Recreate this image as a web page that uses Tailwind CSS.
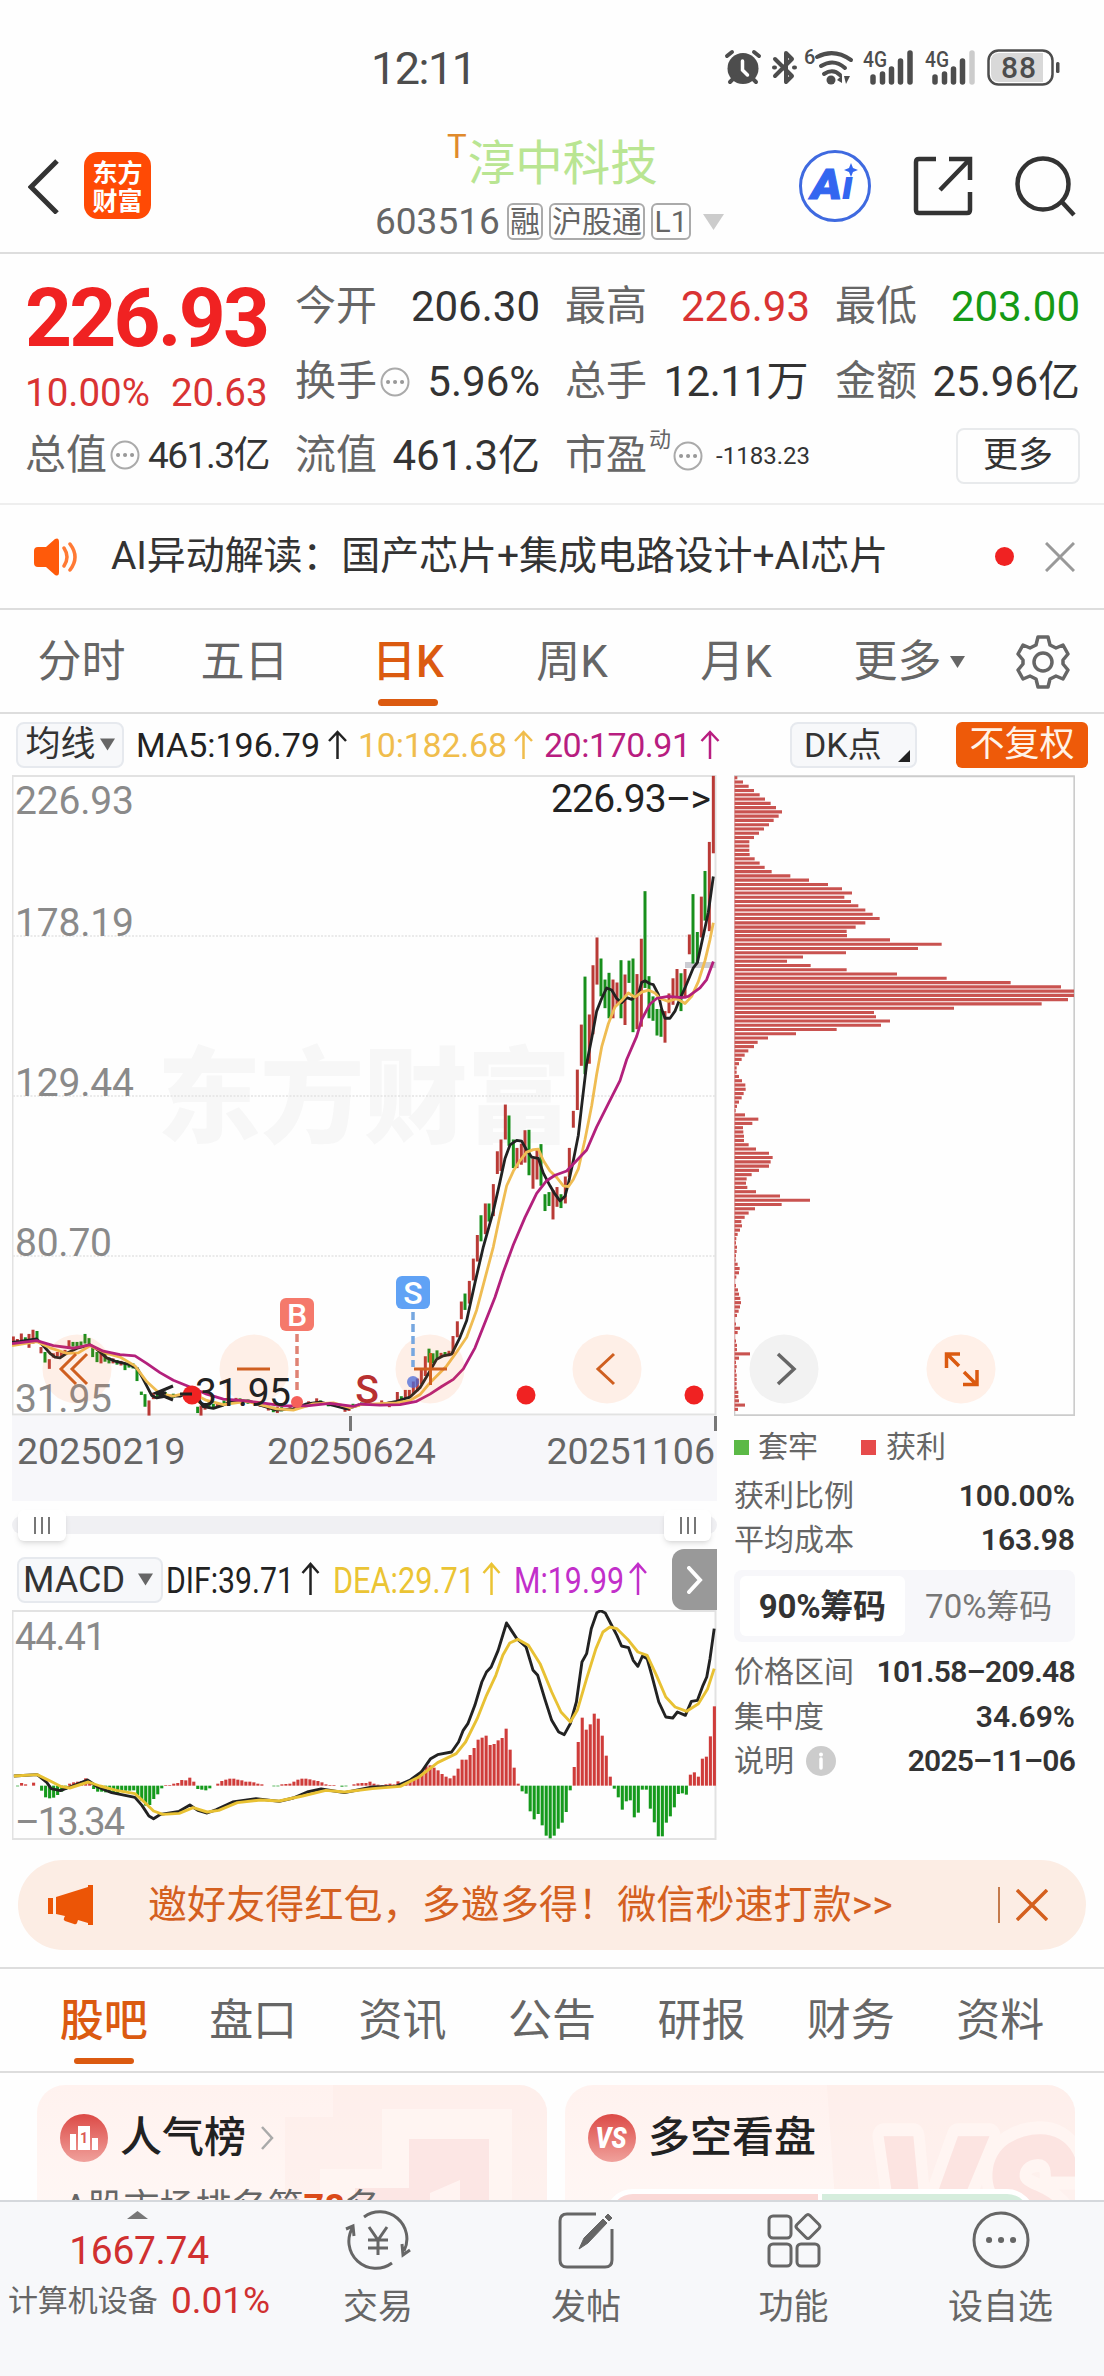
<!DOCTYPE html>
<html lang="zh-CN">
<head>
    <meta charset="UTF-8">
    <title>淳中科技 603516</title>
    <script src="https://cdn.jsdelivr.net/npm/@tailwindcss/browser@4"></script>
    <style>
        body {
            font-family: Roboto, 'Noto Sans CJK SC', sans-serif;
        }
    </style>
</head>
<body class="bg-[#fefefe] text-[#333] w-[1104px] h-[2376px] overflow-hidden flex flex-col leading-none whitespace-nowrap">

    <!-- Status bar -->
    <div class="h-[110px] shrink-0 flex justify-between pl-[371px] pr-[34px] pt-[36px]">
        <div class="h-16 flex items-center text-[45px] tracking-[-1.500px] text-[#4d4d4d]">12:11</div>
        <svg class="w-[360px] h-16" viewBox="0 0 360 64" fill="#4d4d4d">
            <!-- alarm -->
            <circle cx="33" cy="32.500" r="15.500"/>
            <path d="M17 20l5-4M49 20l-5-4M20 46l5-5M46 46l-5-5" stroke="#4d4d4d" stroke-width="4" stroke-linecap="round"/>
            <path d="M32.500 25v9l5 5" stroke="#fff" stroke-width="3.500" fill="none" stroke-linecap="round"/>
            <!-- bluetooth -->
            <path d="M65 23l17 17-6 6V17l6 6-17 17M64 31.500h1M84 31.500h1" stroke="#4d4d4d" stroke-width="4" fill="none" stroke-linejoin="round" stroke-linecap="round"/>
            <!-- wifi -->
            <text x="94" y="28" font-size="20" font-weight="500">6</text>
            <path d="M107 21q17-9 34 3M111 30q13-8 24 2M114 38q9-6 16 1" stroke="#4d4d4d" stroke-width="4" fill="none" stroke-linecap="round"/>
            <circle cx="121" cy="44" r="4.500"/>
            <path d="M127 44l5-5v8zM134 40h6l-4 8z"/>
            <!-- signals -->
            <text x="153" y="31" font-size="22" font-weight="500" textLength="24" lengthAdjust="spacingAndGlyphs">4G</text>
            <path d="M163 41v5M172.500 38v8M181.500 33v13M190.500 25v21M200 17v29" stroke="#4d4d4d" stroke-width="5.500" stroke-linecap="round"/>
            <text x="215" y="31" font-size="22" font-weight="500" textLength="24" lengthAdjust="spacingAndGlyphs">4G</text>
            <path d="M225 41v5M234.500 38v8M243.500 33v13M252.500 25v21" stroke="#4d4d4d" stroke-width="5.500" stroke-linecap="round"/>
            <path d="M262 17v29" stroke="#ccc" stroke-width="5.500" stroke-linecap="round"/>
            <!-- battery -->
            <rect x="278.500" y="14.500" width="64" height="34" rx="10" fill="#fff" stroke="#4d4d4d" stroke-width="2.500"/>
            <path d="M289 17h44v29h-44q-8 0-8-8V25q0-8 8-8z" fill="#d9d9d9"/>
            <rect x="346" y="26" width="3.500" height="11" rx="1.500"/>
            <text x="291" y="42" font-size="30" font-weight="500" textLength="35">88</text>
        </svg>
    </div>

    <!-- Title bar -->
    <header class="h-36 shrink-0 relative border-b-2 border-[#ddd] flex items-center pt-[10px] px-[28px]">
        <svg class="w-8 h-14" viewBox="0 0 32 56" fill="none" stroke="#333" stroke-width="5"><path d="M29 3L3 29l26 26"/></svg>
        <div class="ml-6 -mt-[2px] size-[67px] rounded-[14px] bg-[#ff4a05] text-white text-[25px] font-bold leading-[28px] flex flex-col items-center justify-center" style="font-family:'Noto Sans CJK SC',sans-serif"><span>东方</span><span>财富</span></div>
        <div class="absolute left-[375px] top-[22px] w-[352px]">
            <div class="flex pl-[72px]">
                <span class="text-[33px] text-[#e08a2c] -mt-[2px]">T</span>
                <span class="text-[47.500px] leading-[66px] text-[#b9e592] -mt-[1px] ml-px">淳中科技</span>
            </div>
            <div class="flex items-center gap-[6px] mt-[6px] text-[#666]">
                <span class="text-[37px] w-[126px]">603516</span>
                <span class="h-[37px] w-[36px] border-2 border-[#aaa] rounded-md flex items-center justify-center text-[30px]">融</span>
                <span class="h-[37px] w-[96px] border-2 border-[#aaa] rounded-md flex items-center justify-center text-[30px]">沪股通</span>
                <span class="h-[37px] w-[40px] border-2 border-[#aaa] rounded-md flex items-center justify-center text-[30px]">L1</span>
                <svg class="w-[21px] h-4 ml-[6px]" viewBox="0 0 21 16" fill="#ccc"><path d="M0 0h21L10.500 16z"/></svg>
            </div>
        </div>
        <div class="ml-auto flex items-center gap-[42px] -mr-[1px]">
            <svg class="size-[72px]" viewBox="0 0 72 72">
                <circle cx="36" cy="36" r="34.500" fill="#fff" stroke="#3f6ae0" stroke-width="3"/>
                <g font-size="42" font-weight="900" font-style="italic" fill="#3366f0">
                    <text x="12" y="49" stroke="#3366f0" textLength="31" lengthAdjust="spacingAndGlyphs">A</text>
                    <text x="43" y="49" font-size="41">ı</text>
                </g>
                <path d="M52 13l2 5 5 2-5 2-2 5-2-5-5-2 5-2z" fill="#3366f0"/>
            </svg>
            <svg class="size-[60px]" viewBox="0 0 60 60" fill="none" stroke="#333" stroke-width="4.500"><path d="M23 3H6q-3 0-3 3v48q0 3 3 3h48q3 0 3-3V36M36 3h21v21M57 3L27 34"/></svg>
            <svg class="size-[62px]" viewBox="0 0 62 62" fill="none" stroke="#333" stroke-width="4.500"><circle cx="28" cy="29" r="25.500"/><path d="M47 47l12 13"/></svg>
        </div>
    </header>

    <!-- Quote -->
    <section class="h-[251px] shrink-0 border-b-2 border-[#eee] flex pl-[25px] pt-[15px] text-[42px]">
        <div class="w-[270px]">
            <div class="h-[98px] flex items-center text-[82px] font-bold tracking-[-2.800px] text-[#f02222]">226.93</div>
            <div class="h-[52px] flex items-center gap-[21px] text-[38.500px] text-[#d93333]"><span>10.00%</span><span>20.63</span></div>
            <div class="h-[72px] w-[245px] flex items-center">
                <span class="text-[41px] text-[#666]">总值</span>
                <svg class="ml-[3px] size-[30px] shrink-0" viewBox="0 0 30 30"><circle cx="15" cy="15" r="13.500" fill="none" stroke="#aaa" stroke-width="2"/><path d="M8 15h.1M15 15h.1M22 15h.1" stroke="#999" stroke-width="4" stroke-linecap="round"/></svg>
                <span class="ml-2 text-[37px] tracking-[-1.500px]">461.3亿</span>
            </div>
        </div>
        <div class="grid grid-cols-[270px_270px_245px] grid-rows-[75px_75px_73px]">
            <div class="w-[245px] flex items-center justify-between"><span class="text-[41px] text-[#666]">今开</span><span>206.30</span></div>
            <div class="w-[245px] flex items-center justify-between"><span class="text-[41px] text-[#666]">最高</span><span class="text-[#d93333]">226.93</span></div>
            <div class="w-[245px] flex items-center justify-between"><span class="text-[41px] text-[#666]">最低</span><span class="text-[#159a15]">203.00</span></div>
            <div class="w-[245px] flex items-center">
                <span class="text-[41px] text-[#666]">换手</span>
                <svg class="ml-[3px] size-[30px] shrink-0" viewBox="0 0 30 30"><circle cx="15" cy="15" r="13.500" fill="none" stroke="#aaa" stroke-width="2"/><path d="M8 15h.1M15 15h.1M22 15h.1" stroke="#999" stroke-width="4" stroke-linecap="round"/></svg>
                <span class="ml-auto">5.96%</span>
            </div>
            <div class="w-[243px] flex items-center justify-between"><span class="text-[41px] text-[#666]">总手</span><span class="tracking-[-.5px]">12.11万</span></div>
            <div class="w-[245px] flex items-center justify-between"><span class="text-[41px] text-[#666]">金额</span><span>25.96亿</span></div>
            <div class="w-[245px] flex items-center justify-between"><span class="text-[41px] text-[#666]">流值</span><span>461.3亿</span></div>
            <div class="w-[245px] flex items-center">
                <span class="text-[41px] text-[#666]">市盈</span>
                <span class="text-[22px] text-[#666] -mt-8 ml-[2px]">动</span>
                <svg class="ml-[2px] size-[30px] shrink-0" viewBox="0 0 30 30"><circle cx="15" cy="15" r="13.500" fill="none" stroke="#aaa" stroke-width="2"/><path d="M8 15h.1M15 15h.1M22 15h.1" stroke="#999" stroke-width="4" stroke-linecap="round"/></svg>
                <span class="ml-auto text-[24px]">-1183.23</span>
            </div>
            <div class="flex items-center justify-end"><span class="w-[124px] h-14 border-2 border-[#e8eaec] rounded-lg flex items-center justify-center text-[35px]">更多</span></div>
        </div>
    </section>

    <!-- AI news line -->
    <section class="h-[105px] shrink-0 border-b-2 border-[#ddd] flex items-center pl-[33px] pr-[29px] text-[39px]">
        <svg class="w-[46px] h-10" viewBox="0 0 46 40" fill="#ff5a0a"><path d="M5 10h8L22 2q4-2 4 3v30q0 5-4 3l-9-8H5q-4 0-4-4V14q0-4 4-4z"/><path d="M31 11q6 9 0 18M37 7q10 13 0 26" stroke="#ff7a35" stroke-width="3.500" fill="none" stroke-linecap="round"/></svg>
        <span class="ml-[32px] tracking-[-.1px]">AI异动解读：国产芯片+集成电路设计+AI芯片</span>
        <span class="ml-auto size-[19px] rounded-full bg-[#f02222]"></span>
        <svg class="ml-[31px] size-[30px]" viewBox="0 0 30 30" stroke="#999" stroke-width="3"><path d="M1 1l28 28M29 1L1 29"/></svg>
    </section>

    <!-- Period tabs -->
    <nav class="h-[104px] shrink-0 border-b-2 border-[#ddd] grid grid-cols-[163px_163px_164px_164px_164px_182px_86px] text-[44px] text-[#666] pt-[2px]">
        <span class="flex items-center justify-center">分时</span>
        <span class="flex items-center justify-center">五日</span>
        <span class="flex items-center justify-center relative text-[#db5a10] font-medium">日K<i class="absolute bottom-[6px] w-[60px] h-[7px] rounded-full bg-[#db5a10]"></i></span>
        <span class="flex items-center justify-center">周K</span>
        <span class="flex items-center justify-center">月K</span>
        <span class="flex items-center justify-center gap-2">更多<svg class="w-[15px] h-3" viewBox="0 0 15 12" fill="#666"><path d="M0 0h15L7.500 12z"/></svg></span>
        <svg class="self-center justify-self-center size-[54px]" viewBox="0 0 54 54" fill="none" stroke="#666" stroke-width="3.500" stroke-linejoin="round"><path d="M22 2h10l2 8 6 3 7-3 5 9-5 6v4l5 6-5 9-7-3-6 3-2 8H22l-2-8-6-3-7 3-5-9 5-6v-4l-5-6 5-9 7 3 6-3z"/><circle cx="27" cy="27" r="9"/></svg>
    </nav>

    <!-- MA row -->
    <div class="h-[61px] shrink-0 flex items-center pl-4 pr-4 text-[34px]">
        <span class="w-[108px] h-[46px] bg-[#f7f8fa] border-2 border-[#e6e9ee] rounded-lg flex items-center justify-center gap-1 text-[35px]">均线<svg class="w-[15px] h-[13px]" viewBox="0 0 15 12" fill="#666"><path d="M0 0h15L7.500 12z"/></svg></span>
        <svg class="ml-3 h-[46px] w-[590px]" viewBox="136 0 590 46" fill="none" stroke-width="2.500">
            <text x="136" y="35" fill="#222" textLength="184">MA5:196.79</text>
            <path d="M337.500 37V10M329 19l8.500-9 8.500 9" stroke="#222"/>
            <text x="358" y="35" fill="#f0bd4c" textLength="149">10:182.68</text>
            <path d="M523.500 37V10M515 19l8.500-9 8.500 9" stroke="#f0bd4c"/>
            <text x="544" y="35" fill="#b81d80" textLength="147">20:170.91</text>
            <path d="M710 37V10M701.500 19l8.500-9 8.500 9" stroke="#b81d80"/>
        </svg>
        <span class="ml-auto relative w-[127px] h-[46px] bg-[#f7f8fa] border-2 border-[#e6e9ee] rounded-lg flex items-center pl-3">DK点<svg class="absolute right-[5px] bottom-1 size-3" viewBox="0 0 12 12" fill="#222"><path d="M12 0v12H0z"/></svg></span>
        <span class="ml-[39px] w-[132px] h-[46px] bg-[#ee5a09] rounded-md flex items-center justify-center text-[35px] text-[#fff3e8]">不复权</span>
    </div>

    <!-- Charts -->
    <main class="h-[1065px] shrink-0 flex pl-3">
        <div class="w-[705px]">
            <div class="relative w-[705px] h-[641px]">
                <svg class="absolute inset-0 w-[705px] h-[641px]" viewBox="12 776 705 641">
                    <text x="157" y="1136" font-size="104" font-weight="900" fill="#f7f7f7" textLength="414">东方财富</text>
                    <rect x="12.500" y="777" width="703" height="638.500" fill="none" stroke="#e2e2e2" stroke-width="2"/>
                    <path d="M13 937h703M13 1097h703M13 1257h703" stroke="#e4e4e4" stroke-width="1.500" stroke-dasharray="2 1.500"/>
                    <g font-size="39" fill="#8a8a8a">
                        <text x="15" y="815" textLength="119">226.93</text>
                        <text x="15" y="937" textLength="119">178.19</text>
                        <text x="15" y="1097" textLength="119">129.44</text>
                        <text x="15" y="1257" textLength="97">80.70</text>
                        <text x="15" y="1413" textLength="97">31.95</text>
                    </g>
                    <rect x="685" y="963" width="31" height="6" fill="#ccccd2"/>
                </svg>
                <svg id="kline" class="absolute inset-0 w-[705px] h-[641px]" viewBox="36 14 2115 1523" preserveAspectRatio="none" fill="none"></svg>
                <svg class="absolute inset-0 w-[705px] h-[641px]" viewBox="12 776 705 641">
                    <g fill="#ff6a1a" fill-opacity=".1">
                        <circle cx="77" cy="1370" r="34.500"/><circle cx="254" cy="1370" r="34.500"/><circle cx="430" cy="1370" r="34.500"/><circle cx="607" cy="1370" r="34.500"/>
                    </g>
                    <text x="551" y="813" font-size="39" fill="#222" textLength="160">226.93–&gt;</text>
                    <text x="195" y="1407" font-size="39" fill="#222" textLength="96">31.95</text>
                    <g fill="#f02222"><circle cx="192" cy="1396" r="9.500"/><circle cx="526" cy="1396" r="9.500"/><circle cx="694" cy="1396" r="9.500"/></g>
                    <path d="M173 1387l-17 7 17 7M158 1394h8M180 1395h12" stroke="#222" stroke-width="3" fill="none"/>
                    <g stroke="#cf5f20" stroke-width="3" fill="none">
                        <path d="M76 1355l-15 15 15 15M87 1355l-15 15 15 15M237 1370h33M414 1370h33M430.500 1354v32M614 1355l-16 15 16 15"/>
                    </g>
                    <path d="M297 1335v60" stroke="#df8274" stroke-width="3.500" stroke-dasharray="8 4"/>
                    <rect x="280" y="1299" width="34" height="33" rx="6" fill="#f5796b"/>
                    <text x="297" y="1327" font-size="32" font-weight="500" fill="#fff" text-anchor="middle">B</text>
                    <circle cx="297" cy="1403" r="6" fill="#f5605a"/>
                    <path d="M413 1313v55" stroke="#76a7e0" stroke-width="3.500" stroke-dasharray="8 4"/>
                    <rect x="396" y="1277" width="34" height="33" rx="6" fill="#60a2f5"/>
                    <text x="413" y="1305" font-size="32" font-weight="500" fill="#fff" text-anchor="middle">S</text>
                    <circle cx="413" cy="1383" r="6" fill="#4a6ad8" fill-opacity=".75"/>
                    <text x="367" y="1404" font-size="39" font-weight="500" fill="#b83030" text-anchor="middle">S</text>
                </svg>
            </div>

            <!-- Date axis -->
            <div class="relative h-[85px] bg-[#f7f7fa] flex justify-between pl-[5px] pr-[2px] pt-[17px] text-[37.500px] text-[#666]">
                <i class="absolute left-[337px] top-0 w-[3px] h-[15px] bg-[#777]"></i>
                <i class="absolute right-0 top-0 w-[3px] h-[15px] bg-[#777]"></i>
                <span>20250219</span><span class="mr-[29px]">20250624</span><span>20251106</span>
            </div>

            <!-- Range slider -->
            <div class="h-[48px] flex items-center">
                <div class="w-full h-[18px] rounded-full bg-[#f0f0f3] flex items-center justify-between px-[6px]">
                    <span class="w-[48px] h-[31px] bg-white rounded-md shadow-md flex items-center justify-center gap-[5px]"><i class="w-[2px] h-[17px] bg-[#777]"></i><i class="w-[2px] h-[17px] bg-[#777]"></i><i class="w-[2px] h-[17px] bg-[#777]"></i></span>
                    <span class="w-[47px] h-[31px] bg-white rounded-md shadow-md flex items-center justify-center gap-[5px]"><i class="w-[2px] h-[17px] bg-[#777]"></i><i class="w-[2px] h-[17px] bg-[#777]"></i><i class="w-[2px] h-[17px] bg-[#777]"></i></span>
                </div>
            </div>

            <!-- MACD header -->
            <div class="h-[61px] flex items-center pl-[5px]">
                <span class="w-[146px] h-[46px] bg-[#f7f8fa] border-2 border-[#e6e9ee] rounded-lg flex items-center justify-between pl-[4px] pr-2 text-[36px]">MACD<svg class="w-[15px] h-[13px]" viewBox="0 0 15 12" fill="#666"><path d="M0 0h15L7.500 12z"/></svg></span>
                <svg class="h-[60px] w-[509px]" viewBox="163 1550 509 60" font-size="37" fill="none" stroke-width="2.500">
                    <text x="166" y="1593" fill="#222" textLength="128" lengthAdjust="spacingAndGlyphs">DIF:39.71</text>
                    <path d="M310.500 1595v-31M302.500 1573l8-9 8 9" stroke="#222"/>
                    <text x="333" y="1593" fill="#ebc434" textLength="142" lengthAdjust="spacingAndGlyphs">DEA:29.71</text>
                    <path d="M491.500 1595v-31M483.500 1573l8-9 8 9" stroke="#ebc434"/>
                    <text x="514" y="1593" fill="#c22fca" textLength="110" lengthAdjust="spacingAndGlyphs">M:19.99</text>
                    <path d="M638 1595v-31M630 1573l8-9 8 9" stroke="#c22fca"/>
                </svg>
                <span class="w-[45px] h-[61px] rounded-l-xl bg-[#999] flex items-center justify-center"><svg class="w-4 h-7" viewBox="0 0 16 28" fill="none" stroke="#fff" stroke-width="4" stroke-linecap="round"><path d="M2 2l11 12L2 26"/></svg></span>
            </div>

            <div class="relative w-[705px] h-[230px]">
                <svg class="absolute inset-0 w-[705px] h-[230px]" viewBox="12 1611 705 230">
                    <rect x="12.500" y="1612" width="703" height="228" fill="none" stroke="#e2e2e2" stroke-width="2"/>
                    <g font-size="38" fill="#8a8a8a"><text x="15" y="1651" textLength="91">44.41</text><text x="15" y="1836" textLength="110">–13.34</text></g>
                </svg>
                <svg id="macd" class="absolute inset-0 w-[705px] h-[230px]" viewBox="26 604 1514 690" preserveAspectRatio="none" fill="none"></svg>
            </div>
        </div>

        <!-- Chip distribution -->
        <aside class="ml-[17px] w-[341px]">
            <div class="relative h-[641px]">
                <svg id="chips" class="absolute inset-0 w-[341px] h-[641px]" viewBox="42 14 1023 1523" preserveAspectRatio="none" fill="none"></svg>
                <svg class="absolute inset-0 w-[341px] h-[641px]" viewBox="734 776 341 641">
                    <circle cx="784" cy="1370" r="34.500" fill="#f2f2f2"/>
                    <path d="M778 1355l16 15-16 15" fill="none" stroke="#666" stroke-width="3.500"/>
                    <circle cx="961" cy="1370" r="34.500" fill="#fff0e8"/>
                    <path d="M946.500 1369v-14H960M947 1355l12 12M977 1371v14.500H963M976 1385l-12-12" fill="none" stroke="#db5a10" stroke-width="3.500"/>
                </svg>
            </div>
            <div class="h-[58px] flex items-center text-[30px] text-[#666] pt-1">
                <i class="size-[15px] bg-[#5bb946] mr-[9px]"></i>套牢<i class="size-[15px] bg-[#e64b4b] ml-[43px] mr-[10px]"></i>获利
            </div>
            <div class="h-11 flex items-center justify-between text-[30px]"><span class="text-[#666]">获利比例</span><b class="font-semibold">100.00%</b></div>
            <div class="h-11 flex items-center justify-between text-[30px]"><span class="text-[#666]">平均成本</span><b class="font-semibold">163.98</b></div>
            <div class="my-[8px] h-[72px] bg-[#f7f7fa] rounded-lg p-[6px] grid grid-cols-2 text-[33px]">
                <span class="bg-white rounded-md flex items-center justify-center font-bold tracking-[-.3px]">90%筹码</span>
                <span class="flex items-center justify-center text-[#777] pl-1">70%筹码</span>
            </div>
            <div class="h-11 flex items-center justify-between text-[30px]"><span class="text-[#666]">价格区间</span><b class="font-semibold tracking-[-.7px]">101.58–209.48</b></div>
            <div class="h-[45px] flex items-center justify-between text-[30px]"><span class="text-[#666]">集中度</span><b class="font-semibold">34.69%</b></div>
            <div class="h-11 flex items-center text-[30px]">
                <span class="text-[#666]">说明</span>
                <svg class="ml-3 size-[30px]" viewBox="0 0 30 30"><circle cx="15" cy="15" r="15" fill="#ccc"/><path d="M15 13v9" stroke="#fff" stroke-width="3.500" stroke-linecap="round"/><circle cx="15" cy="8.500" r="2" fill="#fff"/></svg>
                <b class="ml-auto font-semibold tracking-[-.8px]">2025–11–06</b>
            </div>
        </aside>
    </main>

    <!-- Invite banner -->
    <div class="h-[129px] shrink-0 border-b-2 border-[#ddd] pt-[20px] px-[18px]">
        <div class="h-[90px] rounded-full bg-[#fcede4] flex items-center pl-[30px] pr-[38px] text-[39px] text-[#d4601f]">
            <svg class="w-[46px] h-10" viewBox="0 0 46 40" fill="#ec5506"><path d="M0 13h5v16H0zM8 12L40 2V0h5v40h-5v-2l-10-3-1 3q-1 2-3 1l-9-3q-2-1-1-3l1-2-9-2z"/></svg>
            <span class="ml-[54px] tracking-[.1px]">邀好友得红包，多邀多得！微信秒速打款&gt;&gt;</span>
            <i class="ml-auto w-[2px] h-9 bg-[#c47a4c]"></i>
            <svg class="ml-4 w-8 h-8" viewBox="0 0 32 32" stroke="#d4601f" stroke-width="3.500"><path d="M1 1l30 30M31 1L1 31"/></svg>
        </div>
    </div>

    <!-- Info tabs -->
    <nav class="h-[104px] shrink-0 border-b-2 border-[#ddd] grid grid-cols-7 px-[29px] text-[44px] text-[#666] pt-[2px]">
        <span class="flex items-center justify-center relative text-[#db5a10] font-medium">股吧<i class="absolute bottom-[7px] w-[60px] h-[6px] rounded-full bg-[#db5a10]"></i></span>
        <span class="flex items-center justify-center">盘口</span>
        <span class="flex items-center justify-center">资讯</span>
        <span class="flex items-center justify-center">公告</span>
        <span class="flex items-center justify-center">研报</span>
        <span class="flex items-center justify-center">财务</span>
        <span class="flex items-center justify-center">资料</span>
    </nav>

    <!-- Cards -->
    <section class="h-[127px] shrink-0 overflow-hidden flex gap-[18px] pt-[12px] px-[37px]">
        <div class="relative w-[510px] h-[200px] shrink-0 rounded-[28px] overflow-hidden bg-gradient-to-b from-[#fff2ef] to-[#fffaf8]">
            <svg class="absolute inset-0 w-[510px] h-[200px]" viewBox="0 0 510 200"><path d="M248 32h48V0h214v200H248z" fill="#fdebe8" opacity=".5"/><path d="M283 84h62V24h130v176H283z" fill="#fff5f2"/><path d="M318 103h54V54h80v146H318z" fill="#fce6e4"/><path d="M393 108l30-13v60h-30z" fill="#fff3f1"/></svg>
            <div class="relative flex items-center pl-[23px] pt-[29px]">
                <svg class="size-12" viewBox="0 0 48 48"><defs><linearGradient id="badge" x2="0" y2="1"><stop stop-color="#dc4a46"/><stop offset="1" stop-color="#f0a19c"/></linearGradient></defs><circle cx="24" cy="24" r="24" fill="url(#badge)"/><path d="M10 20h6v16h-6zM18 12h12v24H18zM32 24h6v12h-6z" fill="#fff"/><text x="24" y="29" font-size="14" font-weight="700" fill="#dc5a56" text-anchor="middle">1</text></svg>
                <span class="ml-3 text-[42px] font-medium text-[#222]">人气榜</span>
                <svg class="ml-[14px] w-[14px] h-[24px]" viewBox="0 0 14 24" fill="none" stroke="#aaa" stroke-width="2.500"><path d="M2 1l10 11L2 23"/></svg>
            </div>
            <div class="relative pl-[27px] mt-[28px] text-[36px] text-[#666]">A股市场排名第<b class="text-[#db4a18]">78</b>名</div>
        </div>
        <div class="relative w-[510px] h-[200px] shrink-0 rounded-[28px] overflow-hidden bg-gradient-to-b from-[#fff2ef] to-[#fffaf8]">
            <svg class="absolute inset-0 w-[510px] h-[200px]" viewBox="0 0 510 200"><path d="M262 0h248v200H276z" fill="#fdebe8" opacity=".5"/><text x="308" y="187" font-size="190" font-weight="900" font-style="italic" fill="#fce4e1" stroke="#fff5f2" stroke-width="26" stroke-linejoin="round" paint-order="stroke" textLength="204" lengthAdjust="spacingAndGlyphs">VS</text></svg>
            <div class="relative flex items-center pl-[23px] pt-[29px]">
                <svg class="size-12" viewBox="0 0 48 48"><circle cx="24" cy="24" r="24" fill="url(#badge)"/><text x="23" y="34" font-size="29" font-weight="900" font-style="italic" fill="#fff" text-anchor="middle" textLength="31" lengthAdjust="spacingAndGlyphs">VS</text></svg>
                <span class="ml-3 text-[42px] font-medium text-[#222]">多空看盘</span>
            </div>
            <div class="relative mx-[40px] mt-[27px] h-16 rounded-[28px] border-[5px] border-white overflow-hidden flex gap-1 bg-white"><i class="flex-1 bg-[#fad9d7]"></i><i class="flex-1 bg-[#d5eddd]"></i></div>
        </div>
    </section>

    <!-- Bottom bar -->
    <footer class="h-[177px] shrink-0 border-t-2 border-[#d5d8dc] bg-[#f7f8fa] flex text-[#666] text-[35px]">
        <div class="w-[274px] flex flex-col items-center pt-[9px]">
            <svg class="w-[21px] h-2" viewBox="0 0 21 8" fill="#777"><path d="M0 8h21L10.500 0z"/></svg>
            <span class="mt-[13px] ml-1 text-[39px] tracking-[-.3px] text-[#d03030]">1667.74</span>
            <div class="mt-[11px] ml-1 flex items-center gap-[13px]"><span class="text-[30px]">计算机设备</span><span class="text-[37px] text-[#d03030]">0.01%</span></div>
        </div>
        <div class="w-[208px] flex flex-col items-center pt-[8px]">
            <svg class="w-[66px] h-[60px]" viewBox="0 0 66 60" fill="none" stroke="#666" stroke-width="3"><path d="M19 7a27 27 0 0 1 40 34M47 53a27 27 0 0 1-39-36M1 19l7-3 1 10M65 40l-7 5-1-11M24 17l9 13 9-13M33 30v15M23 30h20M23 38h20"/></svg>
            <span class="mt-5">交易</span>
        </div>
        <div class="w-[208px] flex flex-col items-center pt-[8px]">
            <svg class="size-[60px]" viewBox="0 0 60 60" fill="none" stroke="#666" stroke-width="3"><path d="M40 4H11q-7 0-7 7v39q0 7 7 7h38q7 0 7-7V19"/><path d="M23 39l5-11L47 9l4 4-19 20zM49 7l3-3 4 4-3 3z" fill="#666" stroke-width="1"/></svg>
            <span class="mt-5">发帖</span>
        </div>
        <div class="w-[207px] flex flex-col items-center pt-[8px]">
            <svg class="size-[60px]" viewBox="0 0 60 60" fill="none" stroke="#666" stroke-width="3"><rect x="5" y="6" width="22" height="22" rx="4"/><rect x="5" y="34" width="22" height="22" rx="4"/><rect x="33" y="34" width="22" height="22" rx="4"/><path d="M42 5.500q2-2 4 0l9 9q2 2 0 4l-9 9q-2 2-4 0l-9-9q-2-2 0-4z"/></svg>
            <span class="mt-5">功能</span>
        </div>
        <div class="w-[207px] flex flex-col items-center pt-[8px]">
            <svg class="size-[60px]" viewBox="0 0 60 60" fill="none" stroke="#666" stroke-width="3"><circle cx="30" cy="30" r="27"/><path d="M18 30h.1M30 30h.1M42 30h.1" stroke-width="6" stroke-linecap="round"/></svg>
            <span class="mt-5">设自选</span>
        </div>
    </footer>

    <script>
        const RED = "#b93a36", GREEN = "#188f1c";

        function line(d, color, width) {
            return `<path d="${d}" stroke="${color}" stroke-width="${width}" stroke-linejoin="round" vector-effect="non-scaling-stroke"/>`;
        }

        // candles: x, high, low, r/g
        const early = "40 1348 1368 r,52 1354 1364 r,64 1341 1358 r,76 1350 1362 g,87 1342 1375 r,99 1332 1365 r,111 1335 1358 g,123 1373 1388 r,135 1385 1410 g,148 1402 1425 r,160 1388 1398 r,172 1385 1395 r,184 1385 1397 r,195 1380 1392 r,207 1357 1375 r,219 1361 1372 g,231 1361 1373 g,243 1360 1370 g,255 1342 1365 g,267 1352 1372 g,278 1372 1397 g,291 1385 1409 g,303 1385 1412 r,315 1385 1408 g,327 1398 1412 g,339 1400 1412 r,351 1404 1415 g,363 1406 1417 r,375 1412 1428 g,387 1410 1422 g,399 1412 1424 g,411 1422 1454 g,424 1479 1487 g,435 1485 1515 g,447 1500 1536 r,460 1482 1497 r,472 1480 1492 g,484 1476 1492 r,496 1480 1494 g,520 1484 1494 g,593 1515 1530 g,603 1512 1536 r,615 1508 1522 r,627 1505 1518 g,640 1508 1520 g,652 1504 1514 r,672 1500 1512 g,708 1494 1504 r,720 1495 1504 g,744 1498 1508 g,780 1505 1515 r,805 1512 1524 r,820 1515 1528 g,832 1515 1530 r,845 1516 1526 g,870 1516 1524 r,926 1502 1510 r,950 1495 1508 r,962 1500 1508 g,985 1506 1514 g,1035 1515 1527 r,1047 1515 1525 r,1059 1508 1518 g";
        const late = "65 1500 1510 r,88 1503 1516 r,112 1480 1503 r,124 1490 1505 g,136 1475 1495 r,148 1475 1493 r,160 1455 1485 r,172 1448 1478 r,184 1425 1462 r,196 1395 1442 r,207 1377 1410 g,219 1388 1412 g,231 1381 1400 g,243 1387 1397 r,255 1385 1395 g,267 1382 1395 r,279 1347 1390 r,292 1312 1350 r,304 1265 1307 r,315 1246 1285 g,328 1216 1270 r,340 1163 1215 r,352 1107 1170 r,363 1060 1122 g,376 1032 1105 r,387 1032 1075 g,400 986 1062 r,412 908 962 r,423 880 955 r,436 797 880 r,447 823 895 g,460 880 948 g,471 900 948 r,484 890 940 r,495 858 935 r,507 857 965 g,519 925 997 r,531 905 975 r,543 891 990 g,555 1010 1050 g,567 1005 1038 g,579 1000 1070 r,591 993 1040 r,603 1010 1043 g,616 968 1032 r,628 900 970 r,640 812 852 r,652 714 810 r,664 607 705 r,675 493 725 g,688 583 700 r,699 466 630 r,711 400 512 r,723 450 540 g,735 500 568 g,747 484 592 g,759 500 592 r,771 507 560 r,783 454 592 g,795 488 608 r,807 455 508 g,819 450 625 g,831 487 618 r,844 403 612 r,855 290 520 g,867 492 592 g,879 540 598 g,891 570 633 g,903 570 636 g,915 575 650 r,927 533 580 r,939 497 560 r,951 475 540 r,963 485 575 g,975 475 545 r,988 393 440 r,999 297 462 g,1012 387 460 g,1024 303 400 r,1035 242 360 g,1048 173 385 r,1060 16 200 r";

        function candles(list) {
            return list.split(",").map((c) => {
                const [x, high, low, dir] = c.split(" ");
                return line(`M${x} ${high}V${low}`, dir === "r" ? RED : GREEN, 3);
            }).join("");
        }

        document.getElementById("kline").innerHTML =
            candles(early) +
            line("M36 1362L60 1360 110 1354 130 1370 150 1388 165 1397 180 1399 200 1388 235 1375 270 1368 290 1378 320 1399 350 1408 390 1415 412 1424 430 1450 455 1488 470 1494 500 1490 540 1490 570 1480 590 1490 610 1515 640 1519 670 1511 700 1500 750 1502 780 1511 830 1523 880 1520 920 1508 960 1504 1000 1512 1040 1520 1080 1510", "#222", 2.8) +
            line("M36 1370L110 1360 150 1375 200 1388 235 1387 270 1370 320 1388 360 1397 405 1418 440 1455 480 1484 520 1490 570 1480 620 1500 670 1510 740 1502 830 1520 880 1523 940 1508 1000 1506 1050 1517 1080 1511", "#efbc52", 2.8) +
            line("M36 1365L110 1358 160 1370 220 1376 270 1368 310 1383 360 1391 405 1394 440 1412 480 1434 520 1452 570 1468 620 1485 670 1497 720 1500 780 1505 850 1513 920 1513 990 1507 1060 1514 1080 1509", "#b3207c", 2.8) +
            `<g transform="translate(1080 0)">` +
            candles(late) +
            line("M0 1508L60 1510 110 1502 150 1492 180 1470 210 1430 230 1402 250 1394 275 1390 300 1350 320 1310 345 1220 370 1135 400 1050 420 980 435 925 450 893 470 882 485 884 500 905 515 922 535 925 550 960 570 990 585 1010 600 1026 615 1015 625 985 640 930 655 870 665 800 680 700 695 640 710 575 725 545 740 520 755 525 770 545 785 555 800 543 815 547 835 535 845 507 855 503 870 510 880 512 895 535 905 570 915 592 930 592 945 575 960 545 975 520 1000 472 1012 460 1030 395 1045 340 1060 255", "#222", 2.8) +
            line("M0 1510L110 1506 150 1500 180 1486 210 1458 260 1418 290 1385 320 1350 350 1285 375 1210 400 1135 420 1060 440 990 460 955 480 930 500 910 520 904 535 903 550 930 570 955 590 970 610 990 625 992 640 975 655 950 675 880 695 800 710 725 725 660 745 605 765 565 785 550 805 532 825 542 845 530 865 525 885 532 900 545 925 552 950 545 975 557 995 540 1015 505 1035 455 1050 405 1060 365", "#efbc52", 2.8) +
            line("M0 1509L60 1511 120 1510 170 1502 210 1485 245 1467 280 1450 310 1425 345 1375 375 1315 405 1255 430 1195 460 1130 495 1065 530 1008 560 978 585 965 620 955 650 930 680 905 710 850 745 795 780 740 800 690 830 635 845 595 870 558 890 545 925 540 965 543 985 540 1020 520 1040 500 1060 457", "#b3207c", 2.8) +
            "</g>";

        // MACD histogram, one value per trading day
        const hist = [-2,8,4,0,9,0,-15,-35,-38,-36,-28,-18,-12,6,10,12,14,22,12,-10,-18,-18,-20,-20,-20,-22,-18,-15,-15,-14,-30,-45,-60,-58,-40,-26,-8,2,2,6,8,17,16,24,12,-10,-12,-14,-8,0,6,14,18,21,21,18,16,12,12,10,6,4,0,0,-2,-2,4,5,6,12,18,21,21,19,16,14,10,4,2,2,0,-3,-2,0,4,7,8,8,12,6,3,2,4,6,4,
            13,8,11,14,21,33,46,58,61,54,46,35,27,22,30,51,78,78,92,113,138,144,150,122,125,136,143,171,108,54,6,
            -17,-24,-77,-101,-85,-119,-150,-158,-150,-129,-111,-79,-14,56,131,204,168,184,216,201,150,90,27,
            -9,-35,-72,-47,-44,-95,-81,-12,-12,-69,-110,-152,-152,-111,-92,-65,-25,-23,-27,33,40,27,81,87,148,238];

        document.getElementById("macd").innerHTML =
            hist.map((v, i) => v ? line(`M${38 + i * 8.6} 1131V${1131 - v}`, v > 0 ? "#cf3c3a" : "#159a1c", 3.1) : "").join("") +
            line("M30 1102L80 1098 100 1120 110 1140 130 1146 150 1135 188 1114 210 1135 240 1152 290 1166 305 1190 320 1222 330 1230 345 1217 385 1208 408 1189 425 1205 445 1213 465 1203 500 1180 550 1170 600 1178 630 1168 660 1150 690 1141 740 1152 800 1135 850 1133 880 1115 905 1090 925 1050 940 1038 970 1030 985 1000 995 965 1005 945 1020 890 1035 820 1045 790 1055 775 1070 725 1088 643 1110 690 1130 715 1145 785 1155 800 1170 870 1185 935 1200 970 1212 978 1225 945 1238 880 1250 760 1260 735 1270 660 1282 612 1290 606 1300 613 1310 640 1325 680 1335 712 1350 717 1360 755 1370 773 1380 742 1390 750 1400 800 1415 880 1430 925 1445 928 1455 910 1472 920 1485 878 1498 875 1510 830 1518 805 1525 750 1534 660", "#222", 2.9) +
            line("M30 1102L80 1098 105 1115 130 1133 150 1138 190 1120 215 1132 250 1145 290 1155 310 1180 330 1207 350 1217 385 1214 415 1197 445 1210 470 1205 510 1182 560 1174 600 1177 650 1162 700 1145 740 1150 800 1140 860 1133 900 1105 940 1062 980 1035 1000 1000 1025 930 1045 860 1065 800 1080 740 1095 703 1112 692 1135 710 1160 765 1185 850 1205 910 1225 940 1240 905 1260 810 1280 720 1295 670 1310 655 1325 660 1350 695 1370 730 1390 740 1410 800 1430 865 1450 895 1475 908 1500 885 1520 840 1534 780", "#e8c133", 2.9);

        // chip distribution, top price to bottom price
        const chips = [52,69,86,102,119,135,152,168,186,176,161,147,132,117,102,88,88,88,89,104,119,134,155,211,267,324,366,396,373,393,415,436,458,479,436,407,380,381,510,665,594,378,249,201,272,380,531,680,872,1023,1062,1062,1044,965,702,462,468,510,483,350,228,144,113,102,85,74,65,57,50,50,57,66,76,77,71,65,57,51,47,75,115,97,69,70,72,72,86,108,147,158,152,147,117,95,80,78,82,108,180,270,185,105,86,74,64,66,60,53,49,48,51,50,48,47,53,59,57,49,44,48,54,57,61,63,60,56,51,44,48,60,53,44,48,51,51,90,57,48,50,48,50,50,50,50,55,55,57,75,54];

        document.getElementById("chips").innerHTML =
            line("M43 17H1063V1535H43Z", "#ccc", 2) +
            line("M44 17V1525", "#eab0ae", 1) +
            chips.map((x, i) => line(`M44 ${20.5 + i * 10.14}H${x}`, "#c95350", 3.1)).join("");
    </script>
</body>
</html>
